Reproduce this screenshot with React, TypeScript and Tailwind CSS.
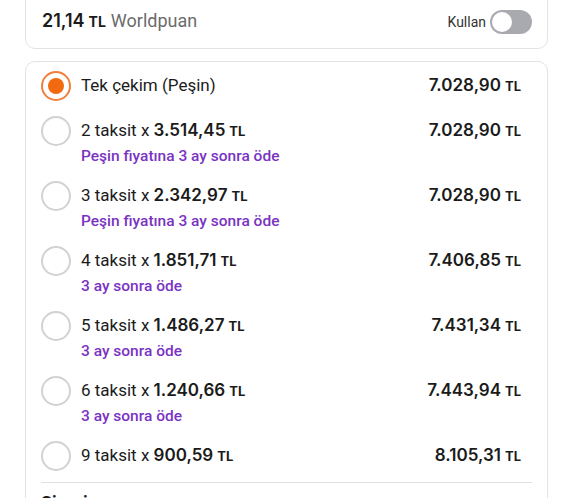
import React from "react";

type Row = { label: React.ReactNode; sub?: string; total: string; selected?: boolean };

const TL = () => <span className="text-[13px] font-bold ml-[4px] [font-family:Inter,sans-serif]">TL</span>;
const Num = ({ v }: { v: string }) => <span className="font-semibold [font-family:Inter,sans-serif]">{v}</span>;

const rows: Row[] = [
  { label: <span>Tek çekim (Peşin)</span>, total: "7.028,90", selected: true },
  { label: <span>2 taksit x <Num v="3.514,45" /><TL /></span>, sub: "Peşin fiyatına 3 ay sonra öde", total: "7.028,90" },
  { label: <span>3 taksit x <Num v="2.342,97" /><TL /></span>, sub: "Peşin fiyatına 3 ay sonra öde", total: "7.028,90" },
  { label: <span>4 taksit x <Num v="1.851,71" /><TL /></span>, sub: "3 ay sonra öde", total: "7.406,85" },
  { label: <span>5 taksit x <Num v="1.486,27" /><TL /></span>, sub: "3 ay sonra öde", total: "7.431,34" },
  { label: <span>6 taksit x <Num v="1.240,66" /><TL /></span>, sub: "3 ay sonra öde", total: "7.443,94" },
  { label: <span>9 taksit x <Num v="900,59" /><TL /></span>, total: "8.105,31" },
];

export default function App() {
  return (
    <div className="w-[581px] h-[498px] overflow-hidden bg-white text-[#1b1b1b]" style={{ fontFamily: "Roboto, 'Liberation Sans', sans-serif" }}>
      <div className="mx-[25px] w-[523px] -mt-[10px] h-[59px] border border-[#e3e3e3] rounded-[10px] flex items-end justify-between pl-[16px] pr-[15px] pb-[14px]">
        <div className="text-[18px] leading-[24px]">
          <span className="font-semibold [font-family:Inter,sans-serif]">21,14</span>
          <span className="text-[14px] font-bold ml-[4px] [font-family:Inter,sans-serif]">TL</span>
          <span className="text-[#6b6b6b] ml-[5px]">Worldpuan</span>
        </div>
        <div className="flex items-center gap-[4px]">
          <span className="text-[14px] text-[#333]">Kullan</span>
          <div className="w-[42px] h-[24px] rounded-full bg-[#a9a9b0] flex items-center pl-[2px]">
            <div className="w-[20px] h-[20px] rounded-full bg-white" />
          </div>
        </div>
      </div>

      <div className="mx-[25px] w-[523px] mt-[12px] border border-[#e3e3e3] rounded-[10px] pt-[9px] px-[15px]">
        <div className="flex flex-col gap-[15px]">
          {rows.map((r, i) => (
            <div key={i} className="flex items-start">
              {r.selected ? (
                <div className="w-[30px] h-[30px] rounded-full border-2 border-[#ee7f3c] flex items-center justify-center shrink-0">
                  <div className="w-[16px] h-[16px] rounded-full bg-[#f26a10]" />
                </div>
              ) : (
                <div className="w-[30px] h-[30px] rounded-full border-2 border-[#d2d2d2] shrink-0" />
              )}
              <div className="ml-[10px] flex-1">
                <div className="flex justify-between items-center h-[30px]">
                  <div className="text-[17px]">{r.label}</div>
                  <div className="text-[17px] mr-[11px]">
                    <Num v={r.total} />
                    <TL />
                  </div>
                </div>
                {r.sub && (
                  <div className="text-[15.5px] leading-[20px] font-medium text-[#7a33c2]">{r.sub}</div>
                )}
              </div>
            </div>
          ))}
        </div>
        <div className="mt-[11px] border-t border-[#e0e0e0]" />
        <div className="pt-[6px] text-[18px] font-semibold">Sipariş</div>
      </div>
    </div>
  );
}
